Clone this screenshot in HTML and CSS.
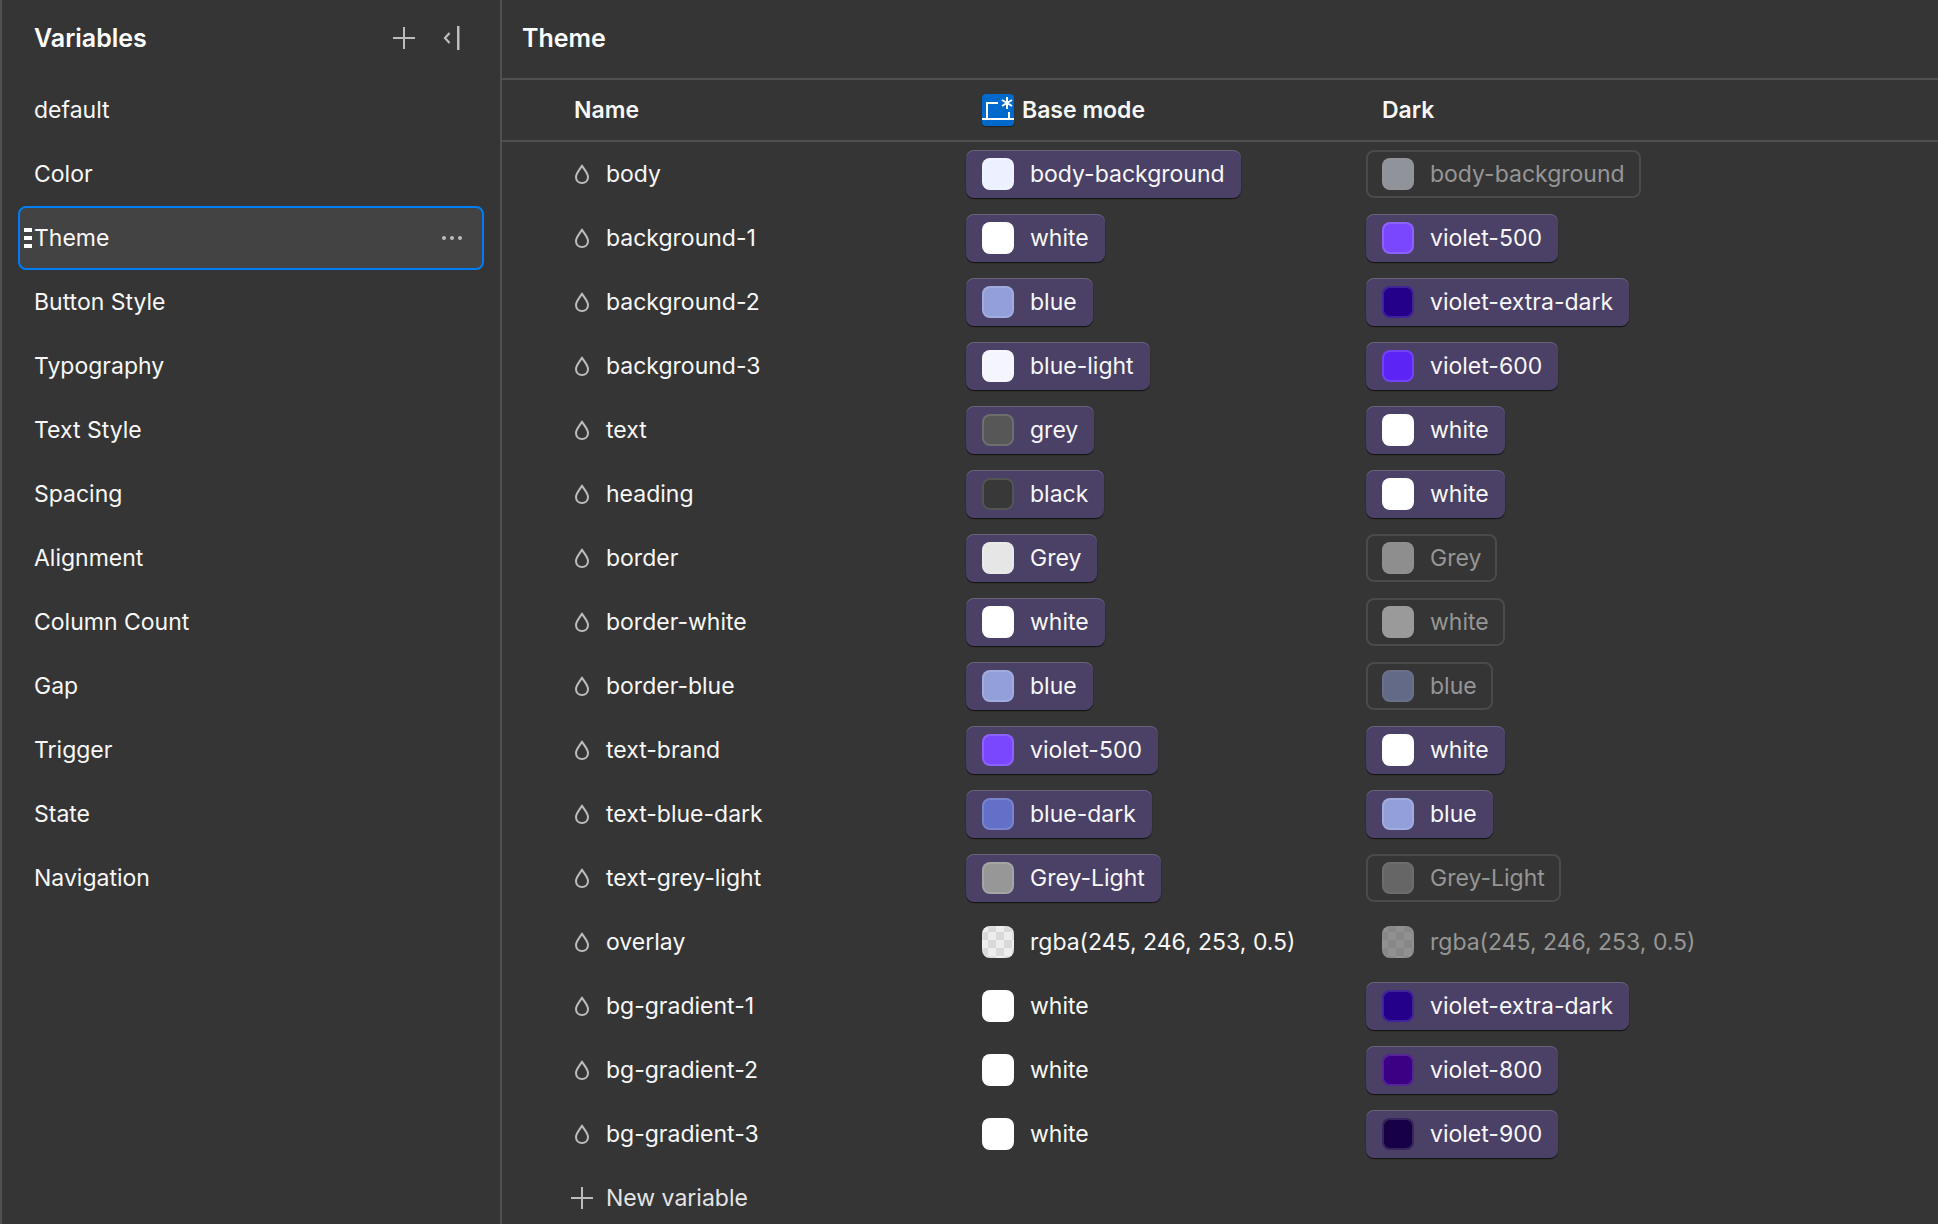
FILE: index.html
```html
<!DOCTYPE html>
<html lang="en">
<head>
  <meta charset="UTF-8">
  <title>Variables</title>
  <link rel="stylesheet" href="styles.css">
</head>
<body>

  <!-- Shared icons -->
  <svg class="sprite" aria-hidden="true">
    <symbol id="drop" viewBox="0 0 16 20">
      <path d="M8 1.6C6.7 4.6 2 8.8 2 13a6 5.8 0 0 0 0 0C2 16.500 4.500 19 8 19s6-2.500 6-6C14 8.800 9.300 4.600 8 1.600Z" fill="none" stroke="currentColor" stroke-width="2" stroke-linejoin="round"/>
    </symbol>
    <symbol id="plus" viewBox="0 0 22 22">
      <path d="M10 0h2v10h10v2H12v10h-2V12H0v-2h10z" fill="currentColor"/>
    </symbol>
  </svg>

  <div class="app">

    <!-- Collections -->
    <aside class="sidebar">
      <div class="sidebar-header">
        <h2>Variables</h2>
        <button class="icon-button" aria-label="New collection"><svg width="22" height="22"><use href="#plus"/></svg></button>
        <button class="icon-button" aria-label="Collapse sidebar">
          <svg width="18" height="24" viewBox="0 0 18 24">
            <path d="M7.500 7 3 12l4.500 5" fill="none" stroke="currentColor" stroke-width="2.200"/>
            <path d="M15 0h2.500v24h-2.500z" fill="currentColor"/>
          </svg>
        </button>
      </div>
      <nav>
        <a class="group" href="#">default</a>
        <a class="group" href="#">Color</a>
        <div class="group selected">
          <span class="grip"></span>
          <a href="#">Theme</a>
          <button class="more" aria-label="Collection options">
            <svg width="20" height="4" viewBox="0 0 20 4" fill="currentColor"><circle cx="2" cy="2" r="2"/><circle cx="10" cy="2" r="2"/><circle cx="18" cy="2" r="2"/></svg>
          </button>
        </div>
        <a class="group" href="#">Button Style</a>
        <a class="group" href="#">Typography</a>
        <a class="group" href="#">Text Style</a>
        <a class="group" href="#">Spacing</a>
        <a class="group" href="#">Alignment</a>
        <a class="group" href="#">Column Count</a>
        <a class="group" href="#">Gap</a>
        <a class="group" href="#">Trigger</a>
        <a class="group" href="#">State</a>
        <a class="group" href="#">Navigation</a>
      </nav>
    </aside>

    <!-- Variables of the selected collection -->
    <main class="panel">
      <h1>Theme</h1>
      <table>
        <colgroup>
          <col class="col-name">
          <col class="col-mode">
          <col>
        </colgroup>
        <thead>
          <tr>
            <th scope="col">Name</th>
            <th scope="col">
              <div class="mode">
                <svg class="mode-icon" width="32" height="32" viewBox="0 0 32 32" fill="none" stroke="#fff" stroke-width="2">
                  <path d="M5 24V9h11M27 24v-6"/>
                  <path d="M0 25h32"/>
                  <path d="M25 3v12M20 6l10 6M20 12l10-6"/>
                </svg>
                Base mode
              </div>
            </th>
            <th scope="col">Dark</th>
          </tr>
        </thead>
        <tbody>
          <tr>
            <td><div class="name"><svg class="drop"><use href="#drop"/></svg>body</div></td>
            <td><button class="chip"><span class="swatch body-bg"></span>body-background</button></td>
            <td><button class="chip inherited"><span class="swatch body-bg"></span>body-background</button></td>
          </tr>
          <tr>
            <td><div class="name"><svg class="drop"><use href="#drop"/></svg>background-1</div></td>
            <td><button class="chip"><span class="swatch white"></span>white</button></td>
            <td><button class="chip"><span class="swatch violet-500"></span>violet-500</button></td>
          </tr>
          <tr>
            <td><div class="name"><svg class="drop"><use href="#drop"/></svg>background-2</div></td>
            <td><button class="chip"><span class="swatch blue"></span>blue</button></td>
            <td><button class="chip"><span class="swatch violet-extra-dark"></span>violet-extra-dark</button></td>
          </tr>
          <tr>
            <td><div class="name"><svg class="drop"><use href="#drop"/></svg>background-3</div></td>
            <td><button class="chip"><span class="swatch blue-light"></span>blue-light</button></td>
            <td><button class="chip"><span class="swatch violet-600"></span>violet-600</button></td>
          </tr>
          <tr>
            <td><div class="name"><svg class="drop"><use href="#drop"/></svg>text</div></td>
            <td><button class="chip"><span class="swatch grey-dark"></span>grey</button></td>
            <td><button class="chip"><span class="swatch white"></span>white</button></td>
          </tr>
          <tr>
            <td><div class="name"><svg class="drop"><use href="#drop"/></svg>heading</div></td>
            <td><button class="chip"><span class="swatch black"></span>black</button></td>
            <td><button class="chip"><span class="swatch white"></span>white</button></td>
          </tr>
          <tr>
            <td><div class="name"><svg class="drop"><use href="#drop"/></svg>border</div></td>
            <td><button class="chip"><span class="swatch grey"></span>Grey</button></td>
            <td><button class="chip inherited"><span class="swatch grey"></span>Grey</button></td>
          </tr>
          <tr>
            <td><div class="name"><svg class="drop"><use href="#drop"/></svg>border-white</div></td>
            <td><button class="chip"><span class="swatch white"></span>white</button></td>
            <td><button class="chip inherited"><span class="swatch white"></span>white</button></td>
          </tr>
          <tr>
            <td><div class="name"><svg class="drop"><use href="#drop"/></svg>border-blue</div></td>
            <td><button class="chip"><span class="swatch blue"></span>blue</button></td>
            <td><button class="chip inherited"><span class="swatch blue"></span>blue</button></td>
          </tr>
          <tr>
            <td><div class="name"><svg class="drop"><use href="#drop"/></svg>text-brand</div></td>
            <td><button class="chip"><span class="swatch violet-500"></span>violet-500</button></td>
            <td><button class="chip"><span class="swatch white"></span>white</button></td>
          </tr>
          <tr>
            <td><div class="name"><svg class="drop"><use href="#drop"/></svg>text-blue-dark</div></td>
            <td><button class="chip"><span class="swatch blue-dark"></span>blue-dark</button></td>
            <td><button class="chip"><span class="swatch blue"></span>blue</button></td>
          </tr>
          <tr>
            <td><div class="name"><svg class="drop"><use href="#drop"/></svg>text-grey-light</div></td>
            <td><button class="chip"><span class="swatch grey-light"></span>Grey-Light</button></td>
            <td><button class="chip inherited"><span class="swatch grey-light"></span>Grey-Light</button></td>
          </tr>
          <tr>
            <td><div class="name"><svg class="drop"><use href="#drop"/></svg>overlay</div></td>
            <td><button class="chip plain"><span class="swatch overlay"></span>rgba(245, 246, 253, 0.5)</button></td>
            <td><button class="chip plain inherited"><span class="swatch overlay"></span>rgba(245, 246, 253, 0.5)</button></td>
          </tr>
          <tr>
            <td><div class="name"><svg class="drop"><use href="#drop"/></svg>bg-gradient-1</div></td>
            <td><button class="chip plain"><span class="swatch white"></span>white</button></td>
            <td><button class="chip"><span class="swatch violet-extra-dark"></span>violet-extra-dark</button></td>
          </tr>
          <tr>
            <td><div class="name"><svg class="drop"><use href="#drop"/></svg>bg-gradient-2</div></td>
            <td><button class="chip plain"><span class="swatch white"></span>white</button></td>
            <td><button class="chip"><span class="swatch violet-800"></span>violet-800</button></td>
          </tr>
          <tr>
            <td><div class="name"><svg class="drop"><use href="#drop"/></svg>bg-gradient-3</div></td>
            <td><button class="chip plain"><span class="swatch white"></span>white</button></td>
            <td><button class="chip"><span class="swatch violet-900"></span>violet-900</button></td>
          </tr>
        </tbody>
      </table>
      <button class="new-variable"><svg width="22" height="22"><use href="#plus"/></svg>New variable</button>
    </main>

  </div>
</body>
</html>
```

FILE: styles.css
```css
* {
  box-sizing: border-box;
}

body {
  margin: 0;
  height: 100vh;
  overflow: hidden;
  background-color: #353535;
  color: #f7f7f7;
  font-family: Inter, "Liberation Sans", sans-serif;
  font-size: 23px;
  line-height: 32px;
}

button {
  margin: 0;
  padding: 0;
  border: 0;
  background: none;
  color: inherit;
  font: inherit;
  cursor: pointer;
}

a {
  color: inherit;
  text-decoration: none;
}

svg {
  display: block;
  flex: none;
}

.sprite {
  display: none;
}

.app {
  display: flex;
  min-height: 100vh;
}

/* Sidebar */
.sidebar {
  flex: none;
  width: 502px;
  padding: 0 16px;
  border: solid #505050;
  border-width: 0 2px;
}

.sidebar-header {
  display: flex;
  align-items: center;
  height: 78px;
  padding: 0 24px 2px 16px;
}

h1,
h2 {
  margin: 0;
  color: #fff;
  font-size: 25px;
  font-weight: 600;
}

.sidebar-header h2 {
  flex: 1;
}

.icon-button {
  color: #bdbdbd;
  margin-left: 27px;
}

.group {
  display: flex;
  align-items: center;
  height: 64px;
  padding: 0 16px;
}

.selected {
  position: relative;
  justify-content: space-between;
  padding: 0 20px 0 14px;
  border: 2px solid #007df4;
  border-radius: 8px;
  background-color: #434343;
}

/* Drag handle over the left edge of the selected row */
.grip {
  position: absolute;
  left: 4px;
  width: 8px;
  height: 20px;
  background: repeating-linear-gradient(#fff 0 4px, transparent 4px 8px);
}

.more {
  color: #bdbdbd;
}

/* Variables table */
.panel {
  flex: 1;
  min-width: 0;
}

.panel h1 {
  height: 80px;
  padding: 22px 20px;
  border-bottom: 2px solid #505050;
}

table {
  width: 100%;
  table-layout: fixed;
  border-collapse: separate;
  border-spacing: 0;
}

.col-name {
  width: 464px;
}

.col-mode {
  width: 400px;
}

th {
  height: 62px;
  padding: 0 16px;
  border-bottom: 2px solid #505050;
  font-weight: 600;
  text-align: left;
}

th:first-child {
  padding-left: 72px;
}

td {
  height: 64px;
  padding: 0;
}

.mode {
  display: flex;
  align-items: center;
  gap: 8px;
}

.mode-icon {
  border-radius: 4px;
  background-color: #006acc;
  box-shadow: 0 1px 1px #222;
}

.name {
  display: flex;
  align-items: center;
  gap: 16px;
  padding-left: 72px;
}

.drop {
  width: 16px;
  height: 20px;
  color: #bdbdbd;
}

.chip {
  display: flex;
  align-items: center;
  gap: 16px;
  height: 48px;
  padding: 0 16px;
  border-radius: 8px;
  background-color: #4b4066;
  box-shadow: inset 0 1px #6a607f, 0 1px 1px #111;
  white-space: nowrap;
}

.chip.plain {
  background: none;
  box-shadow: none;
}

.chip.inherited {
  background: none;
  box-shadow: inset 0 0 0 2px #4a4a4a;
  color: #969696;
}

.chip.plain.inherited {
  box-shadow: none;
}

.inherited .swatch {
  opacity: 0.5;
}

/* Colour swatches */
.swatch {
  width: 32px;
  height: 32px;
  border-radius: 8px;
  box-shadow: inset 0 0 0 2px rgba(255, 255, 255, 0.14);
}

.white { background-color: #fff; }
.body-bg { background-color: #edf1ff; }
.blue { background-color: #929fd9; }
.blue-light { background-color: #f5f6fd; }
.blue-dark { background-color: #6370c7; }
.grey { background-color: #e6e6e6; }
.grey-light { background-color: #979797; }
.grey-dark { background-color: #575757; }
.black { background-color: #383838; }
.violet-500 { background-color: #7a47ff; }
.violet-600 { background-color: #5c24f5; }
.violet-800 { background-color: #3b0083; }
.violet-900 { background-color: #170045; }
.violet-extra-dark { background-color: #24008a; }

.overlay {
  background: repeating-conic-gradient(#d9d9db 0 25%, #ededed 0 50%) 6px 6px / 16px 16px;
}

.new-variable {
  display: flex;
  align-items: center;
  gap: 13px;
  height: 64px;
  padding-left: 69px;
  color: #e4e4e4;
}

.new-variable svg {
  color: #bdbdbd;
}
```
